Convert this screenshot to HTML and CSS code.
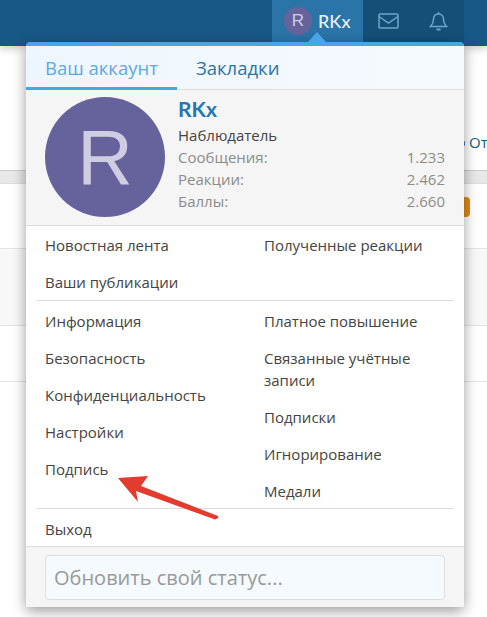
FILE: index.html
```html
<!DOCTYPE html>
<html lang="ru">
<head>
    <meta charset="UTF-8">
    <meta name="viewport" content="width=device-width, initial-scale=1.0">
    <title>Ваш аккаунт</title>
    <link rel="stylesheet" href="styles.css">
</head>
<body>

    <header class="topbar">
        <a class="nav-user">
            <span class="avatar-small">R</span>
            <span class="nav-name">RKx</span>
        </a>
        <a class="nav-icon">
            <svg width="21" height="16" viewBox="0 0 21 16" fill="none" stroke="#6fa5c9" stroke-width="1.5">
                <rect x="1" y="1" width="19" height="14" rx="1"/>
                <path d="M1 3.5l9.5 6.5 9.500-6.500"/>
            </svg>
        </a>
        <a class="nav-icon">
            <svg width="19" height="21" viewBox="0 0 19 21" fill="none" stroke="#6fa5c9" stroke-width="1.5">
                <path d="M9.500 3c-3.200 0-5 2.400-5 5.400 0 4-1.200 5.200-3 7.100h16c-1.800-1.900-3-3.100-3-7.100 0-3-1.800-5.400-5-5.400z"/>
                <path d="M9.500 3V1"/>
                <path d="M7.500 18.500h4" stroke-width="2"/>
            </svg>
        </a>
    </header>

    <main class="page">
        <span class="bg-ring"></span>
        <a class="bg-link">От</a>
        <div class="bg-band"></div>
        <div class="bg-row bg-row-first"><span class="bg-badge"></span></div>
        <div class="bg-row bg-row-grey"></div>
        <div class="bg-row bg-row-last"></div>
    </main>

    <div class="menu">
        <span class="menu-caret"></span>
        <div class="tabs">
            <a class="tab tab-active">Ваш аккаунт</a>
            <a class="tab">Закладки</a>
        </div>

        <div class="profile">
            <div class="avatar-big">R</div>
            <div class="profile-info">
                <a class="profile-name">RKx</a>
                <div class="profile-title">Наблюдатель</div>
                <dl class="stat"><dt>Сообщения:</dt><dd>1.233</dd></dl>
                <dl class="stat"><dt>Реакции:</dt><dd>2.462</dd></dl>
                <dl class="stat"><dt>Баллы:</dt><dd>2.660</dd></dl>
            </div>
        </div>

        <ul class="links links-first">
            <li>Новостная лента</li>
            <li>Полученные реакции</li>
            <li>Ваши публикации</li>
        </ul>
        <div class="sep"></div>
        <div class="links-cols">
            <ul class="links-col">
                <li>Информация</li>
                <li>Безопасность</li>
                <li>Конфиденциальность</li>
                <li>Настройки</li>
                <li>Подпись</li>
            </ul>
            <ul class="links-col">
                <li>Платное повышение</li>
                <li>Связанные учётные записи</li>
                <li>Подписки</li>
                <li>Игнорирование</li>
                <li>Медали</li>
            </ul>
        </div>
        <div class="sep sep-last"></div>
        <ul class="links">
            <li>Выход</li>
        </ul>

        <div class="status">
            <div class="status-input">Обновить свой статус...</div>
        </div>
    </div>

    <!-- стрелка поверх меню -->
    <svg class="arrow" width="112" height="52" viewBox="0 0 112 52">
        <path d="M8 8L38 6L31 16L108 46Q109 49 105 49.500L26 21L28 32z" fill="#e33b2e"/>
    </svg>

</body>
</html>
```

FILE: styles.css
```css
/* страница */
html, body {
    margin: 0;
    padding: 0;
    height: 617px;
    overflow: hidden;
}

body {
    position: relative;
    font-family: "Open Sans", "Noto Sans", sans-serif;
    background-color: #fff;
    color: #444;
}

ul, dl, dd {
    margin: 0;
    padding: 0;
    list-style: none;
}

/* верхняя панель */
.topbar {
    display: flex;
    justify-content: flex-end;
    height: 46px;
    padding-right: 23px;
    background-color: #185886;
    box-sizing: border-box;
    box-shadow: 0 3px 8px rgba(0, 0, 0, 0.2);
}

.nav-user {
    display: flex;
    align-items: center;
    gap: 6px;
    width: 91px;
    height: 42px;
    box-sizing: border-box;
    padding-left: 12px;
    background-color: #2a74a8;
}

.avatar-small {
    width: 28px;
    height: 28px;
    border-radius: 50%;
    background-color: #66639c;
    color: #cfcde3;
    font-family: "Liberation Sans", sans-serif;
    font-size: 17px;
    line-height: 28px;
    text-align: center;
}

.nav-name {
    color: #e8f2f9;
    font-family: "Lato", sans-serif;
    font-size: 18px;
    font-weight: 500;
}

.nav-icon {
    display: flex;
    align-items: center;
    justify-content: center;
    width: 50.5px;
    height: 42px;
    background-color: #154f78;
}

/* фон за меню */
.page {
    position: relative;
    height: 571px;
    padding-top: 124px;
    box-sizing: border-box;
}

.bg-ring {
    position: absolute;
    top: 92px;
    left: 454px;
    width: 9px;
    height: 9px;
    border: 1.5px solid #185886;
    border-radius: 50%;
}

.bg-link {
    position: absolute;
    top: 86px;
    left: 469px;
    color: #185886;
    font-size: 15px;
}

.bg-band {
    height: 12px;
    background-color: #e8e8e8;
    border-top: 1px solid #ccc;
    border-bottom: 1px solid #ddd;
}

.bg-row {
    position: relative;
    border-bottom: 1px solid #e4e4e4;
}

.bg-row-first {
    height: 64px;
}

.bg-row-grey {
    height: 76px;
    background-color: #f8f8f8;
}

.bg-row-last {
    height: 55px;
}

.bg-badge {
    position: absolute;
    top: 13px;
    left: 437px;
    width: 33px;
    height: 20px;
    border-radius: 4px;
    background-color: #e08a17;
}

/* выпадающее меню */
.menu {
    position: absolute;
    top: 42px;
    left: 26px;
    width: 438px;
    border-top: 4px solid #47a7e6;
    border-radius: 4px;
    background-color: #fff;
    box-shadow: 0 4px 14px rgba(0, 0, 0, 0.4);
}

.menu-caret {
    position: absolute;
    top: -14px;
    left: 282px;
    width: 0;
    height: 0;
    border-left: 9px solid transparent;
    border-right: 9px solid transparent;
    border-bottom: 10px solid #47a7e6;
}

.tabs {
    display: flex;
    height: 43px;
    background: linear-gradient(to right, #eef6fd, #f5fafe);
    border-bottom: 1px solid #ddd;
}

.tab {
    padding: 9px 19px 0;
    font-size: 18.5px;
    line-height: 26px;
    color: #2a74a8;
}

.tab-active {
    width: 113px;
    color: #5caae4;
    border-bottom: 3px solid #47a7e6;
    margin-bottom: -1px;
    white-space: nowrap;
}

.profile {
    display: flex;
    height: 136px;
    padding: 7px 19px 0;
    box-sizing: border-box;
    background-color: #f5f5f5;
    border-bottom: 1px solid #ddd;
}

.avatar-big {
    flex: none;
    width: 120px;
    height: 120px;
    border-radius: 50%;
    background-color: #66639c;
    color: #cfcde3;
    font-family: "Liberation Sans", sans-serif;
    font-size: 77px;
    line-height: 120px;
    text-align: center;
}

.profile-info {
    flex: 1;
    margin-left: 13px;
}

.profile-name {
    display: block;
    color: #2577b1;
    font-family: "Lato", sans-serif;
    font-size: 21px;
    font-weight: 700;
    line-height: 24px;
    margin-bottom: 3px;
}

.profile-title {
    font-size: 15px;
    line-height: 22px;
    color: #444;
}

.stat {
    display: flex;
    justify-content: space-between;
    margin: 0;
    font-size: 15px;
    line-height: 22px;
    color: #8c8c8c;
}

.links {
    display: grid;
    grid-template-columns: 1fr 1fr;
    padding-top: 2px;
}

.links-first {
    padding-top: 1px;
}

.links li, .links-col li {
    padding: 7px 19px 8px;
    font-size: 15px;
    line-height: 22px;
}

.sep {
    height: 1px;
    margin: -1px 10px 0;
    background-color: #ddd;
}

.sep-last {
    margin-top: -2px;
}

.links-cols {
    display: grid;
    grid-template-columns: 1fr 1fr;
    padding-top: 2px;
}

/* статус */
.status {
    position: relative;
    margin-top: -2px;
    padding: 8px 19px 7px;
    background-color: #f5f5f5;
    border-top: 1px solid #ddd;
}

.status-input {
    height: 45px;
    box-sizing: border-box;
    padding: 0 8px;
    border: 1px solid #ddd;
    border-radius: 4px;
    background-color: #f5fafe;
    color: #999;
    font-size: 20px;
    line-height: 43px;
}

.arrow {
    position: absolute;
    top: 470px;
    left: 110px;
}
```
